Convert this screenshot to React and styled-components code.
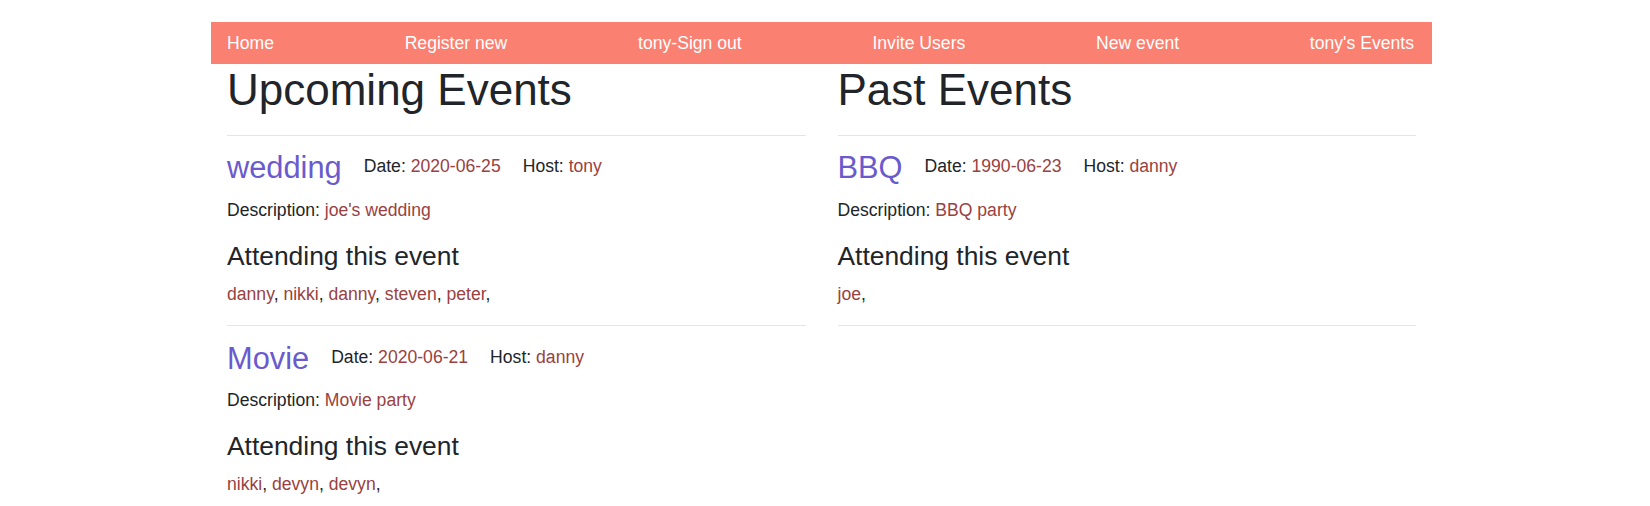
import React from "react";
import styled, { createGlobalStyle } from "styled-components";

const upcoming = [
  {
    title: "wedding",
    date: "2020-06-25",
    host: "tony",
    description: "joe's wedding",
    attendees: ["danny", "nikki", "danny", "steven", "peter"],
  },
  {
    title: "Movie",
    date: "2020-06-21",
    host: "danny",
    description: "Movie party",
    attendees: ["nikki", "devyn", "devyn"],
  },
];

const past = [
  {
    title: "BBQ",
    date: "1990-06-23",
    host: "danny",
    description: "BBQ party",
    attendees: ["joe"],
  },
];

const links = [
  "Home",
  "Register new",
  "tony-Sign out",
  "Invite Users",
  "New event",
  "tony's Events",
];

const EventItem = ({ event }) => {
  return (
    <>
      <Divider />
      <TitleRow>
        <EventTitle>{event.title}</EventTitle>
        <Meta>
          Date: <Value>{event.date}</Value>
        </Meta>
        <Meta>
          Host: <Value>{event.host}</Value>
        </Meta>
      </TitleRow>
      <Text>
        Description: <Value>{event.description}</Value>
      </Text>
      <SubHeading>Attending this event</SubHeading>
      <Text>
        {event.attendees.map((name, i) => (
          <React.Fragment key={i}>
            <Value>{name}</Value>,{" "}
          </React.Fragment>
        ))}
      </Text>
    </>
  );
};

const App = () => {
  return (
    <Page>
      <GlobalStyle />
      <Nav>
        {links.map((l) => (
          <NavLink key={l} href="#">
            {l}
          </NavLink>
        ))}
      </Nav>
      <Columns>
        <Column>
          <Heading>Upcoming Events</Heading>
          {upcoming.map((e) => (
            <EventItem key={e.title} event={e} />
          ))}
          <Divider />
        </Column>
        <Column>
          <Heading>Past Events</Heading>
          {past.map((e) => (
            <EventItem key={e.title} event={e} />
          ))}
          <Divider />
        </Column>
      </Columns>
    </Page>
  );
};

export default App;

const GlobalStyle = createGlobalStyle`
  html {
    font-size: 17.6px;
  }
  body {
    margin: 0;
    font-family: "Liberation Sans", Arial, sans-serif;
    font-size: 1rem;
    line-height: 1.5;
    color: #212529;
    background: #fff;
  }
`;

const Page = styled.div`
  width: 1221px;
  margin: 22px 0 0 211px;
`;

const Nav = styled.nav`
  display: flex;
  justify-content: space-between;
  align-items: center;
  background-color: salmon;
  padding: 8px 18px 8px 16px;
`;

const NavLink = styled.a`
  color: #fff;
  text-decoration: none;
  line-height: 26.4px;
`;

const Columns = styled.div`
  display: grid;
  grid-template-columns: 1fr 1fr;
`;

const Column = styled.div`
  padding: 0 16px;
`;

const Heading = styled.h1`
  font-size: 2.5rem;
  font-weight: 400;
  line-height: 1.2;
  margin: 0 0 0.5rem;
`;

const Divider = styled.hr`
  border: 0;
  border-top: 1px solid rgba(0, 0, 0, 0.1);
  margin: 1rem 0;
  height: 0;
`;

const TitleRow = styled.div`
  display: flex;
  align-items: flex-start;
  gap: 22px;
  margin-bottom: 12.4px;
`;

const EventTitle = styled.h3`
  font-size: 1.75rem;
  font-weight: 400;
  line-height: 1;
  color: slateblue;
  margin: 0;
`;

const Meta = styled.span`
  line-height: 1.5;
`;

const Value = styled.a`
  color: #9a4141;
  text-decoration: none;
`;

const Text = styled.p`
  margin: 0 0 1rem;
`;

const SubHeading = styled.h4`
  font-size: 1.5rem;
  font-weight: 400;
  line-height: 1.2;
  margin: 0 0 0.5rem;
`;
